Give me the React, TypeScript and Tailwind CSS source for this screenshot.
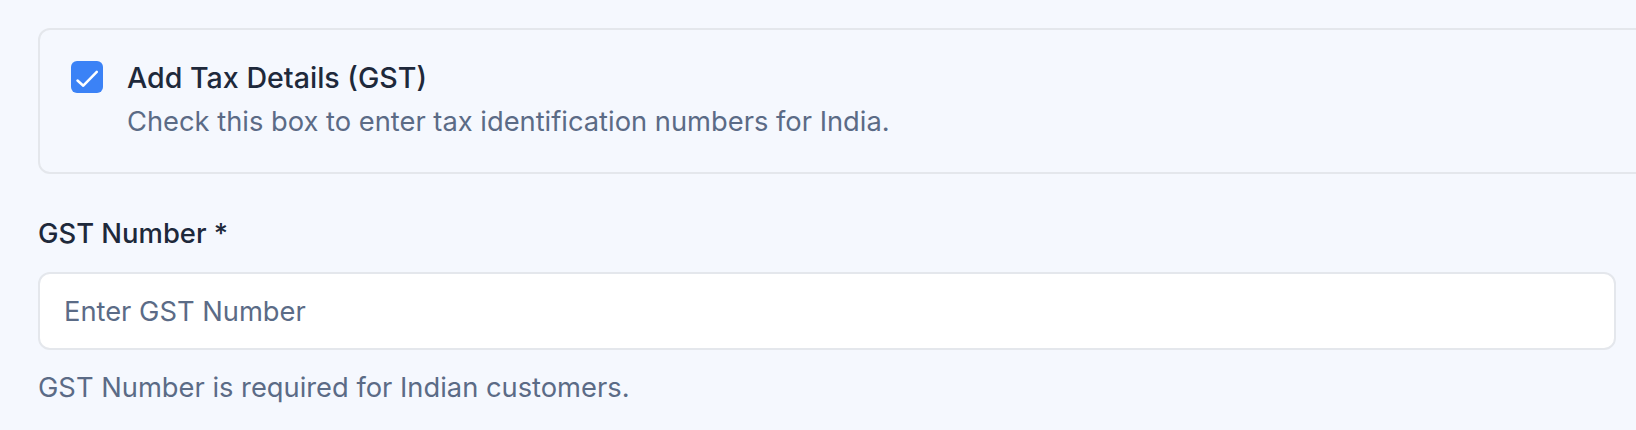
import { useState } from 'react';

export default function App() {
  const [checked, setChecked] = useState(true);
  const [gst, setGst] = useState('');

  return (
    <div
      className="min-h-screen w-full overflow-hidden bg-[#f5f8fe] pt-[28px] pl-[38px] pr-[20px]"
      style={{ fontFamily: 'Inter, "Noto Sans", sans-serif' }}
    >
      {/* Tax details toggle */}
      <div className="w-[1640px] rounded-[12px] border-2 border-[#e4e7ec] bg-[#f5f8fe] px-[31px] pt-[28px] pb-[30px]">
        <label className="flex cursor-pointer items-start gap-[24px]">
          <button
            type="button"
            onClick={() => setChecked(!checked)}
            className={`mt-[3px] flex h-[32px] w-[32px] shrink-0 items-center justify-center rounded-[6px] ${
              checked ? 'bg-[#3b82f6]' : 'border-2 border-[#cbd5e1] bg-white'
            }`}
          >
            {checked && (
              <svg width="32" height="32" viewBox="0 0 32 32" fill="none">
                <path
                  d="M6.5 19.5l5.8 5.2L25.8 10.8"
                  stroke="white"
                  strokeWidth="2.5"
                  strokeLinecap="round"
                  strokeLinejoin="round"
                />
              </svg>
            )}
          </button>
          <div className="flex flex-col gap-[4px]">
            <span className="text-[28.6px] leading-[40px] font-medium text-[#1e293b]">Add Tax Details (GST)</span>
            <span className="text-[27.3px] leading-[40px] text-[#5b6b86]">
              Check this box to enter tax identification numbers for India.
            </span>
          </div>
        </label>
      </div>

      {checked && (
        <div className="mt-[39px] w-[1578px]">
          <div className="mb-[19px] text-[27.4px] leading-[40px] font-medium text-[#1e293b]">GST Number *</div>
          <input
            value={gst}
            onChange={(e) => setGst(e.target.value)}
            placeholder="Enter GST Number"
            className="h-[78px] w-full rounded-[12px] border-2 border-[#e4e7ec] bg-white px-[24px] text-[27.3px] text-[#1e293b] placeholder:text-[#5b6b86] focus:outline-none"
          />
          <div className="mt-[18px] text-[27.3px] leading-[40px] text-[#5b6b86]">
            GST Number is required for Indian customers.
          </div>
        </div>
      )}
    </div>
  );
}
